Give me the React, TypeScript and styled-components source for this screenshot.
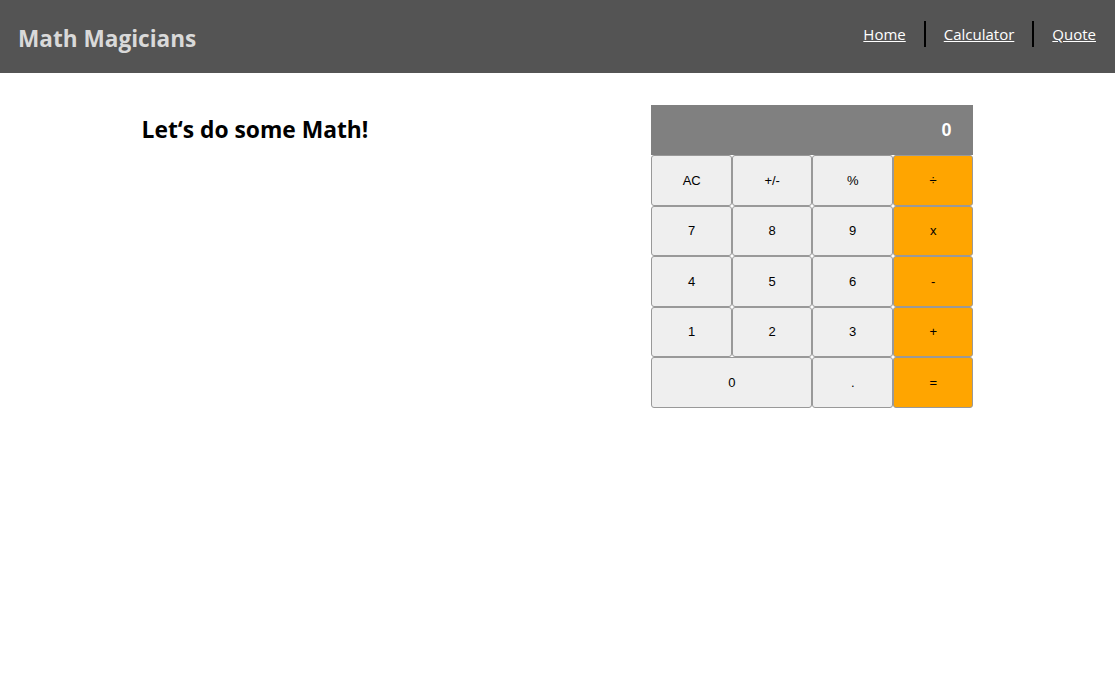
import React from "react";
import styled, { createGlobalStyle } from "styled-components";

const Global = createGlobalStyle`
  html, body { margin: 0; padding: 0; background: #fff; }
  body { font-family: "Open Sans", "Noto Sans", sans-serif; }
`;

const Header = styled.header`
  height: 73px;
  background: #545454;
  display: flex;
  align-items: center;
  justify-content: space-between;
  padding: 0 0 0 18px;
`;

const Logo = styled.h1`
  margin: 3px 0 0;
  font-size: 22.6px;
  font-weight: 700;
  color: #d9d9d9;
`;

const Nav = styled.nav`
  display: flex;
  align-items: center;
  padding-right: 19px;
  margin-bottom: 5px;
`;

const NavLink = styled.a<{ $divider?: boolean }>`
  color: #fff;
  font-size: 15px;
  text-decoration: underline;
  padding: 0 18px;
  line-height: 26px;
  border-left: ${(p) => (p.$divider ? "2px solid #000" : "none")};
  &:first-child { padding-left: 0; }
  &:last-child { padding-right: 0; }
`;

const Main = styled.main`
  display: flex;
  justify-content: space-around;
  align-items: flex-start;
  padding-top: 32px;
`;

const Heading = styled.h2`
  margin: 9px 0 0;
  font-size: 22.8px;
  font-weight: 700;
  color: #000;
`;

const Calc = styled.div`
  width: 322px;
  display: grid;
  grid-template-columns: repeat(4, 1fr);
`;

const Display = styled.div`
  grid-column: 1 / -1;
  height: 50px;
  background: #808080;
  color: #fff;
  font-family: "Liberation Sans", Arial, sans-serif;
  font-weight: 700;
  font-size: 18px;
  display: flex;
  align-items: center;
  justify-content: flex-end;
  padding-right: 22px;
  box-sizing: border-box;
`;

const Key = styled.button<{ $op?: boolean; $wide?: boolean }>`
  height: 50.5px;
  grid-column: ${(p) => (p.$wide ? "span 2" : "auto")};
  background: ${(p) => (p.$op ? "#ffa500" : "#efefef")};
  border: 1px solid #999;
  border-radius: 3px;
  font-family: "Liberation Sans", Arial, sans-serif;
  font-size: 13px;
  color: #000;
  padding: 0;
  margin: 0;
`;

const keys: { label: string; op?: boolean; wide?: boolean }[] = [
  { label: "AC" }, { label: "+/-" }, { label: "%" }, { label: "÷", op: true },
  { label: "7" }, { label: "8" }, { label: "9" }, { label: "x", op: true },
  { label: "4" }, { label: "5" }, { label: "6" }, { label: "-", op: true },
  { label: "1" }, { label: "2" }, { label: "3" }, { label: "+", op: true },
  { label: "0", wide: true }, { label: "." }, { label: "=", op: true },
];

export default function App() {
  return (
    <>
      <Global />
      <Header>
        <Logo>Math Magicians</Logo>
        <Nav>
          <NavLink href="#">Home</NavLink>
          <NavLink href="#" $divider>Calculator</NavLink>
          <NavLink href="#" $divider>Quote</NavLink>
        </Nav>
      </Header>
      <Main>
        <Heading>Let‘s do some Math!</Heading>
        <Calc>
          <Display>0</Display>
          {keys.map((k) => (
            <Key key={k.label} $op={k.op} $wide={k.wide}>{k.label}</Key>
          ))}
        </Calc>
      </Main>
    </>
  );
}
